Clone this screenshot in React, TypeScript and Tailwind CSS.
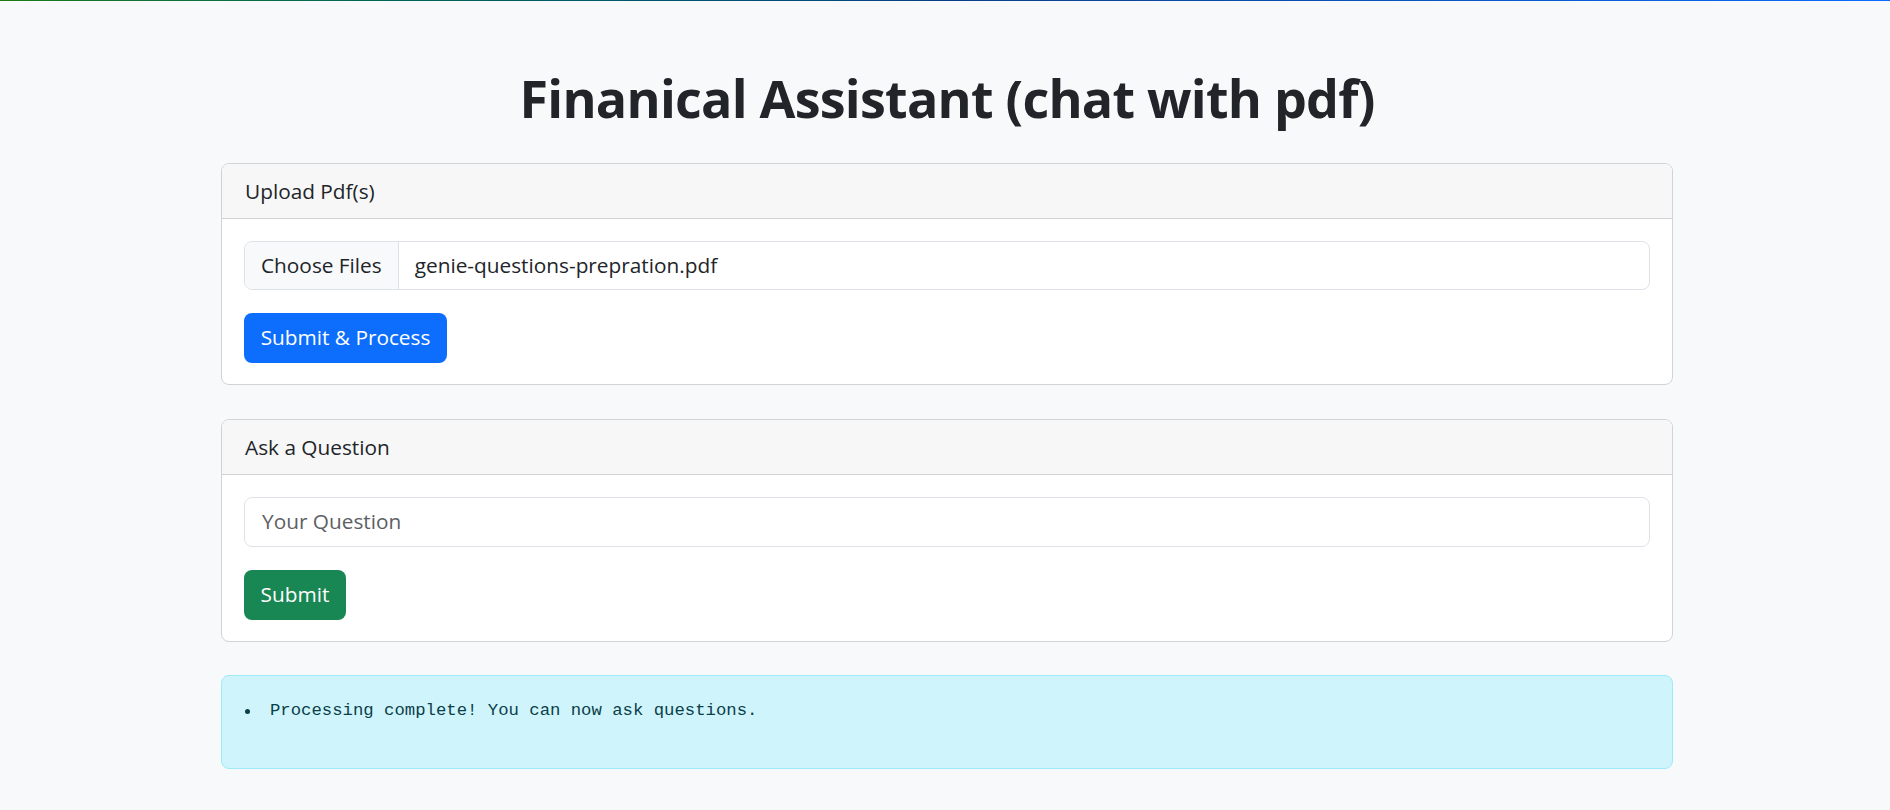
import React from "react";

const sans = { fontFamily: '"Open Sans", "Noto Sans", Arial, sans-serif' };

function Card({ title, children }: { title: string; children: React.ReactNode }) {
  return (
    <div className="rounded-[8px] border border-[#d3d3d3] bg-white overflow-hidden">
      <div className="h-[55px] border-b border-[#d3d3d3] bg-[#f7f7f7] px-[23px] flex items-center text-[20.8px] leading-[31px] text-[#212529]">
        {title}
      </div>
      <div className="px-[22px] pt-[22px] pb-[21px] flex flex-col gap-[23px] items-start">{children}</div>
    </div>
  );
}

export default function App() {
  return (
    <div className="min-h-screen w-full bg-[#f8f9fa] text-[#212529]" style={sans}>
      <div className="h-px w-full bg-linear-to-r from-[#1d7a0e] via-[#0a3f86] to-[#0a6cff]" />
      <div className="flex justify-center pl-[4px]">
        <div className="w-[1452px] flex flex-col">
          <h1 className="mt-[66px] mb-[34px] text-center text-[52px] leading-[62px] font-bold tracking-[-0.75px] text-[#212529]">
            Finanical Assistant (chat with pdf)
          </h1>

          <Card title="Upload Pdf(s)">
            <div className="w-full h-[49px] rounded-[8px] border border-[#dee2e6] bg-white flex items-stretch overflow-hidden text-[20.8px]">
              <div className="flex items-center bg-[#f8f9fa] border-r border-[#dee2e6] px-[16px] text-[#212529]">
                Choose Files
              </div>
              <div className="flex items-center pl-[16px] text-[#212529]">genie-questions-prepration.pdf</div>
            </div>
            <button className="h-[50px] w-[203px] rounded-[8px] bg-[#0d6efd] text-white text-[20.8px] flex items-center justify-center">
              Submit &amp; Process
            </button>
          </Card>

          <div className="h-[34px]" />

          <Card title="Ask a Question">
            <div className="w-full h-[50px] rounded-[8px] border border-[#dee2e6] bg-white flex items-center px-[17px] text-[20.8px] text-[#5c6064]">
              Your Question
            </div>
            <button className="h-[50px] w-[102px] rounded-[8px] bg-[#198754] text-white text-[20.8px] flex items-center justify-center">
              Submit
            </button>
          </Card>

          <div className="h-[33px]" />

          <div className="h-[94px] rounded-[8px] border border-[#9eeaf9] bg-[#cff4fc] px-[21px] pt-[21px] text-[#055160]">
            <div className="flex items-center h-[28px]">
              <div className="ml-[2px] w-[5px] h-[5px] rounded-full bg-[#0b3f4a]" />
              <div
                className="ml-[20px] text-[17.3px] leading-[28px] text-[#0b3f4a]"
                style={{ fontFamily: '"Liberation Mono", "DejaVu Sans Mono", monospace' }}
              >
                Processing complete! You can now ask questions.
              </div>
            </div>
          </div>
        </div>
      </div>
    </div>
  );
}
